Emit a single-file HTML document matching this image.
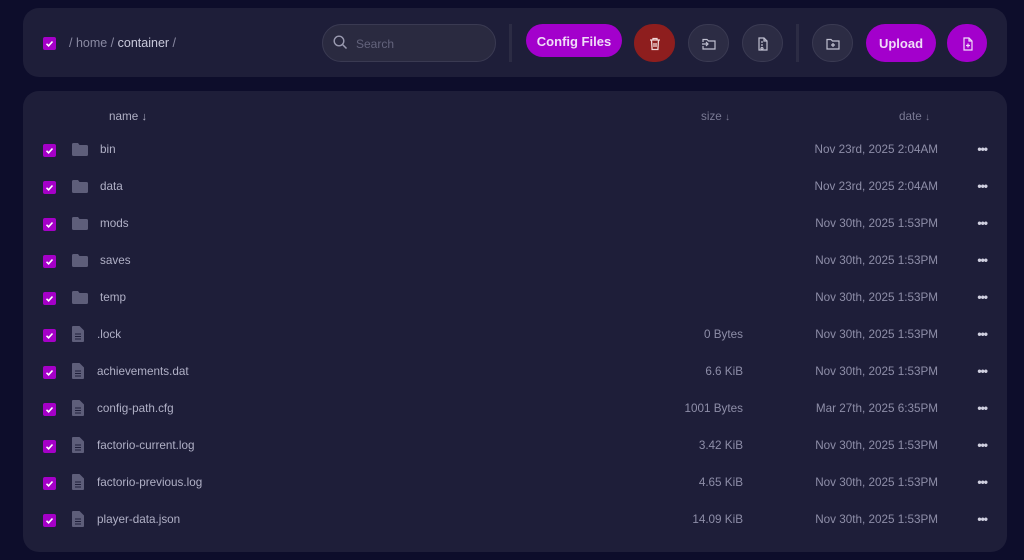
<!DOCTYPE html>
<html><head><meta charset="utf-8"><style>
*{box-sizing:border-box;margin:0;padding:0}
body{width:1024px;height:560px;background:#0d0d2b;font-family:"Liberation Sans",sans-serif;position:relative;overflow:hidden;color:#c9c9d8}
.p{position:absolute;left:23px;width:984px;background:#1e1e39;border-radius:16px}
.cb{position:absolute;width:13px;height:13px;background:#a500c8;border-radius:2px}
.cb svg{position:absolute;left:2px;top:2px}
.abs{position:absolute}
.btn{position:absolute;top:24px;height:38px;width:40px;border-radius:19px;background:#2c2c44;border:1px solid #3a3a52}
.btn svg{position:absolute;left:12px;top:11px}
.row{position:absolute;left:0;width:984px;height:20px;font-size:11.7px}
.nm{position:absolute;left:74px;top:3px;color:#b0b0c6}
.sz{position:absolute;right:264px;top:3px;color:#8e8ea8}
.dt{position:absolute;right:69px;top:3px;color:#8e8ea8}
.dots{position:absolute;right:20px;top:2px;color:#d0d0e0;font-weight:bold;font-size:12px;letter-spacing:-1px}
</style></head><body>
<div class="p" style="top:8px;height:69px"></div>
<div class="cb" style="left:43px;top:37px"><svg width="9" height="9" viewBox="0 0 9 9"><path d="M1.5 4.8 3.6 6.8 7.5 2.5" stroke="#fff" stroke-width="1.6" fill="none"/></svg></div>
<div class="abs" style="left:69px;top:36px;font-size:12.5px;color:#8a8aa2">/ home / <span style="color:#c8c8da">container</span> /</div>
<div class="abs" style="left:322px;top:24px;width:174px;height:38px;border-radius:19px;background:#2a2a40;border:1px solid #3a3a52"></div>
<svg class="abs" style="left:333px;top:35px" width="15" height="15" viewBox="0 0 15 15"><circle cx="6" cy="6" r="4.8" stroke="#9a9ab0" stroke-width="1.4" fill="none"/><path d="M9.5 9.5 13.5 13.5" stroke="#9a9ab0" stroke-width="1.5"/></svg>
<div class="abs" style="left:356px;top:37px;font-size:12px;color:#63637c">Search</div>
<div class="abs" style="left:509px;top:24px;width:3px;height:38px;background:#2c2c44"></div>
<div class="abs" style="left:526px;top:24px;width:96px;height:33px;border-radius:17px;background:#a300cc;color:#f0dcf8;font-weight:bold;font-size:13px;text-align:center;line-height:35px">Config Files</div>
<div class="btn" style="left:634px;width:41px;background:#8e1e1e;border-color:#8e1e1e"><svg width="16" height="16" viewBox="0 0 16 16"><path d="M3 4h10M6 4V2.5h4V4M4.5 4l.6 9.5h5.8l.6-9.5M7 7v4M9 7v4" stroke="#f0d8d8" stroke-width="1.3" fill="none"/></svg></div>
<div class="btn" style="left:688px;width:41px"><svg width="16" height="16" viewBox="0 0 16 16"><path d="M2 6V3.5h4l1.5 1.5H14v8H2V10M1 8h6M5 6l2 2-2 2" stroke="#c0c0d0" stroke-width="1.2" fill="none"/></svg></div>
<div class="btn" style="left:742px;width:41px"><svg width="16" height="16" viewBox="0 0 16 16"><path d="M4 2h5l3 3v9H4zM9 2v3h3M7 5v2M7 8v2M7 11.5a1 1 0 1 0 .01 0" stroke="#c0c0d0" stroke-width="1.2" fill="none"/></svg></div>
<div class="abs" style="left:796px;top:24px;width:3px;height:38px;background:#2c2c44"></div>
<div class="btn" style="left:812px;width:41px"><svg width="16" height="16" viewBox="0 0 16 16"><path d="M2 3.5h4l1.5 1.5H14v8H2zM8 7v4M6 9h4" stroke="#c0c0d0" stroke-width="1.2" fill="none"/></svg></div>
<div class="abs" style="left:866px;top:24px;width:70px;height:38px;border-radius:19px;background:#a300cc;color:#f0dcf8;font-weight:bold;font-size:13px;text-align:center;line-height:39px">Upload</div>
<div class="btn" style="left:947px;width:40px;background:#a300cc;border-color:#a300cc"><svg width="16" height="16" viewBox="0 0 16 16"><path d="M4 2h5l3 3v9H4zM9 2v3h3M8 7.5v4M6 9.5h4" stroke="#f0dcf8" stroke-width="1.2" fill="none"/></svg></div>

<div class="p" style="top:91px;height:461px">
<div class="abs" style="left:86px;top:19px;font-size:11.7px;color:#b0b0c4">name <span style="font-size:11px">↓</span></div>
<div class="abs" style="left:678px;top:19px;font-size:11.7px;color:#7a7a94">size <span style="font-size:10px">↓</span></div>
<div class="abs" style="left:876px;top:19px;font-size:11.7px;color:#7a7a94">date <span style="font-size:10px">↓</span></div>
</div>
<div id="rows" style="position:absolute;left:23px;top:0"></div>
<script>
var d=[["bin",1,"","Nov 23rd, 2025 2:04AM"],["data",1,"","Nov 23rd, 2025 2:04AM"],["mods",1,"","Nov 30th, 2025 1:53PM"],["saves",1,"","Nov 30th, 2025 1:53PM"],["temp",1,"","Nov 30th, 2025 1:53PM"],[".lock",0,"0 Bytes","Nov 30th, 2025 1:53PM"],["achievements.dat",0,"6.6 KiB","Nov 30th, 2025 1:53PM"],["config-path.cfg",0,"1001 Bytes","Mar 27th, 2025 6:35PM"],["factorio-current.log",0,"3.42 KiB","Nov 30th, 2025 1:53PM"],["factorio-previous.log",0,"4.65 KiB","Nov 30th, 2025 1:53PM"],["player-data.json",0,"14.09 KiB","Nov 30th, 2025 1:53PM"]];
var h="";d.forEach(function(r,i){var y=140+i*37;
var ic=r[1]?'<svg class="abs" style="left:49px;top:3px" width="16" height="13" viewBox="0 0 16 13"><path d="M0 1.5Q0 0 1.5 0H6l1.5 2h7Q16 2 16 3.5v8Q16 13 14.5 13h-13Q0 13 0 11.5z" fill="#5e5e7a"/></svg>':'<svg class="abs" style="left:49px;top:1px" width="12" height="16" viewBox="0 0 12 16"><path d="M0 1Q0 0 1 0h6.5L12 4.5V15q0 1-1 1H1q-1 0-1-1z" fill="#5e5e7a"/><path d="M3 8h6M3 10.5h6M3 13h6" stroke="#1e1e39" stroke-width="1"/></svg>';
h+='<div class="row" style="top:'+y+'px"><div class="cb" style="left:20px;top:4px"><svg width="9" height="9" viewBox="0 0 9 9"><path d="M1.5 4.8 3.6 6.8 7.5 2.5" stroke="#fff" stroke-width="1.6" fill="none"/></svg></div>'+ic+'<div class="nm" style="left:'+(r[1]?77:74)+'px">'+r[0]+'</div><div class="sz">'+r[2]+'</div><div class="dt">'+r[3]+'</div><div class="dots">•••</div></div>';});
document.getElementById("rows").innerHTML=h;
</script>
</body></html>
